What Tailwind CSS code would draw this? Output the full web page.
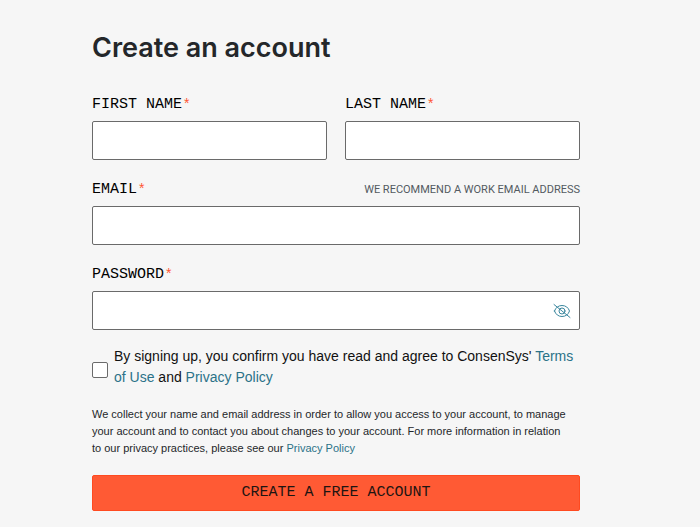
<!DOCTYPE html>
<html lang="en">
  <head>
    <meta charset="UTF-8" />
    <meta name="viewport" content="width=device-width, initial-scale=1.0" />
    <title>Create an account</title>
    <script src="https://cdn.jsdelivr.net/npm/@tailwindcss/browser@4"></script>
  </head>
  <body class="min-h-screen bg-[#f6f6f6] font-['Liberation_Sans',sans-serif] text-[#111]">
    <main class="pt-7 pb-4 pl-[92px] pr-[120px]">
      <h1 class="font-['Inter',sans-serif] text-[27px] leading-10 font-semibold text-[#24272a]">Create an account</h1>

      <form class="mt-[27px]">
        <!-- Name -->
        <div class="grid grid-cols-2 gap-[18px]">
          <div>
            <label for="first-name" class="flex h-5 items-start gap-0.5 font-['Liberation_Mono',monospace] text-[15px] leading-5 text-black">
              FIRST NAME
              <span class="font-['Liberation_Sans',sans-serif] text-sm leading-4 text-[#ff5733]">*</span>
            </label>
            <input id="first-name" type="text" required class="mt-1.5 block h-[39px] w-full rounded-xs border border-[#6a6a6a] bg-white px-3" />
          </div>
          <div>
            <label for="last-name" class="flex h-5 items-start gap-0.5 font-['Liberation_Mono',monospace] text-[15px] leading-5 text-black">
              LAST NAME
              <span class="font-['Liberation_Sans',sans-serif] text-sm leading-4 text-[#ff5733]">*</span>
            </label>
            <input id="last-name" type="text" required class="mt-1.5 block h-[39px] w-full rounded-xs border border-[#6a6a6a] bg-white px-3" />
          </div>
        </div>

        <!-- Email -->
        <div class="mt-5">
          <div class="flex items-center justify-between">
            <label for="email" class="flex h-5 items-start gap-0.5 font-['Liberation_Mono',monospace] text-[15px] leading-5 text-black">
              EMAIL
              <span class="font-['Liberation_Sans',sans-serif] text-sm leading-4 text-[#ff5733]">*</span>
            </label>
            <span id="email-hint" class="font-['Roboto',sans-serif] text-[11px] text-[#535a61]">WE RECOMMEND A WORK EMAIL ADDRESS</span>
          </div>
          <input id="email" type="email" required aria-describedby="email-hint" class="mt-1.5 block h-[39px] w-full rounded-xs border border-[#6a6a6a] bg-white px-3" />
        </div>

        <!-- Password -->
        <div class="mt-5">
          <label for="password" class="flex h-5 items-start gap-0.5 font-['Liberation_Mono',monospace] text-[15px] leading-5 text-black">
            PASSWORD
            <span class="font-['Liberation_Sans',sans-serif] text-sm leading-4 text-[#ff5733]">*</span>
          </label>
          <div class="relative mt-1.5">
            <input id="password" type="password" required class="block h-[39px] w-full rounded-xs border border-[#6a6a6a] bg-white pl-3 pr-9" />
            <button type="button" aria-label="Show password" class="absolute inset-y-0 right-2 flex items-center text-[#3b879e]">
              <svg class="size-5" viewBox="0 0 20 20" fill="none" stroke="currentColor" stroke-linecap="round" stroke-linejoin="round">
                <path d="M2.5 10C3.6 6.6 6.4 4.5 10 4.5S16.4 6.6 17.5 10C16.4 13.4 13.6 15.5 10 15.5S3.6 13.4 2.5 10Z" />
                <circle cx="10" cy="10" r="3" />
                <path d="M2 3.5 18 16.5" />
              </svg>
            </button>
          </div>
        </div>

        <!-- Terms -->
        <div class="mt-4 flex items-center gap-1.5">
          <input id="terms" type="checkbox" required class="mt-1.5 size-4 shrink-0 appearance-none rounded-xs border border-[#6a6a6a] bg-white checked:bg-[#3b879e]" />
          <label for="terms" class="text-sm leading-[21px]">
            By signing up, you confirm you have read and agree to ConsenSys' <a href="#" class="text-[#2b7288]">Terms of Use</a> and <a href="#" class="text-[#2b7288]">Privacy Policy</a>
          </label>
        </div>

        <p class="mt-[18px] text-[11px] leading-[17px] text-[#24272a]">
          We collect your name and email address in order to allow you access to your account, to manage your account and to contact you about changes to your account. For more information in relation to&nbsp;our privacy practices, please see our <a href="#" class="text-[#2b7288]">Privacy Policy</a>
        </p>

        <button type="submit" class="mt-[18px] flex h-9 w-full items-center justify-center rounded-xs border border-[#ff4a20] bg-[#ff5a34] font-['Liberation_Mono',monospace] text-[15px] text-[#1d1512]">CREATE A FREE ACCOUNT</button>
      </form>
    </main>
  </body>
</html>
